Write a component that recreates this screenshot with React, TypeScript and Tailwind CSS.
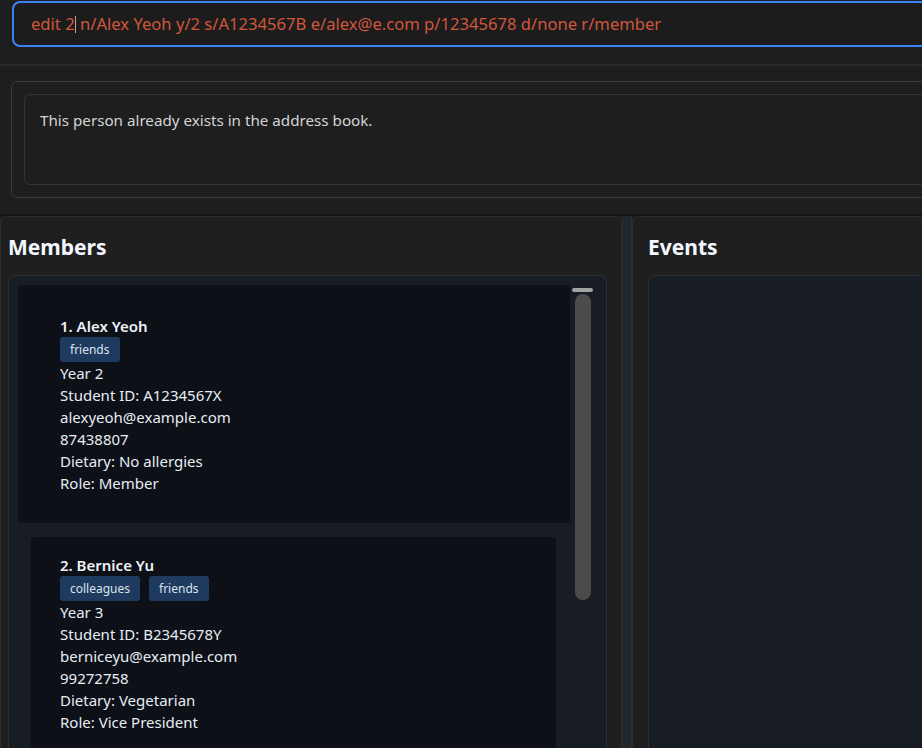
import React from 'react';

interface Member {
    name: string;
    tags: string[];
    year: string;
    studentId: string;
    email: string;
    phone: string;
    dietary: string;
    role: string;
}

const members: Member[] = [
    {
        name: '1. Alex Yeoh',
        tags: ['friends'],
        year: 'Year 2',
        studentId: 'A1234567X',
        email: 'alexyeoh@example.com',
        phone: '87438807',
        dietary: 'No allergies',
        role: 'Member',
    },
    {
        name: '2. Bernice Yu',
        tags: ['colleagues', 'friends'],
        year: 'Year 3',
        studentId: 'B2345678Y',
        email: 'berniceyu@example.com',
        phone: '99272758',
        dietary: 'Vegetarian',
        role: 'Vice President',
    },
];

const MemberCard: React.FC<{ member: Member; selected?: boolean }> = ({ member, selected }) => {
    return (
        <div
            className={
                selected
                    ? 'rounded bg-[#0d1017] pl-[42px] pt-[30px] pb-[29px]'
                    : 'ml-[13px] mr-[14px] rounded bg-[#0d1017] pl-[29px] pt-[17px] pb-[29px]'
            }
        >
            <div className="text-[15px] font-semibold leading-[22px] text-[#eef2f7]">{member.name}</div>
            <div className="flex gap-[9px]">
                {member.tags.map((tag) => (
                    <span
                        key={tag}
                        className="flex h-[25px] items-center rounded-[3px] bg-[#1f3a5f] px-[10px] text-[12px] text-[#dbe4ee]"
                    >
                        {tag}
                    </span>
                ))}
            </div>
            <div className="text-[15px] leading-[22px] text-[#e6edf3]">
                <div>{member.year}</div>
                <div>Student ID: {member.studentId}</div>
                <div>{member.email}</div>
                <div>{member.phone}</div>
                <div>Dietary: {member.dietary}</div>
                <div>Role: {member.role}</div>
            </div>
        </div>
    );
};

const App: React.FC = () => {
    return (
        <div
            className="h-screen w-full overflow-hidden bg-[#1e1e1e]"
            style={{ fontFamily: '"Noto Sans", "Open Sans", sans-serif' }}
        >
            <div className="flex h-full w-[1240px] flex-col">
                {/* command box */}
                <div className="h-[64px] pl-3 pt-px">
                    <div className="flex h-[46px] items-center rounded-lg border-2 border-[#3b82f6] bg-[#1c1c1c] pl-[17px] text-[16.6px] text-[#d0573c]">
                        <span className="whitespace-pre">edit 2</span>
                        <span className="h-[17px] w-px bg-[#c9a090]" />
                        <span className="whitespace-pre"> n/Alex Yeoh y/2 s/A1234567B e/alex@e.com p/12345678 d/none r/member</span>
                    </div>
                </div>
                <div className="h-[2px] bg-[#2a2a2a]" />

                {/* result display */}
                <div className="h-[148px] pl-[11px] pt-[15px]">
                    <div className="h-[117px] rounded-md border border-[#3a3a3a] p-3">
                        <div className="h-[91px] rounded-md border border-[#30343c] px-[15px] pt-[15px] text-[15.2px] leading-5 text-[#d4d4d4]">
                            This person already exists in the address book.
                        </div>
                    </div>
                </div>
                <div className="h-[2px] bg-[#141414]" />

                {/* panels */}
                <div className="flex min-h-0 flex-1">
                    <div className="flex w-[622px] flex-col rounded-t-md border-x border-t border-[#2c2c2c] bg-[#1f1f1f] pl-[7px] pr-[14px]">
                        <h2 className="flex h-[58px] items-center pt-[4px] text-[21px] font-bold text-[#f3f7ff]">Members</h2>
                        <div className="flex min-h-0 flex-1 rounded-t-lg border-x border-t border-[#2b3038] bg-[#181c23] pl-[9px] pt-[9px]">
                            <div className="flex flex-1 flex-col gap-[14px]">
                                {members.map((m, i) => (
                                    <MemberCard key={m.name} member={m} selected={i === 0} />
                                ))}
                            </div>
                            <div className="flex w-[36px] flex-col items-center pr-[11px] pt-[3px]">
                                <div className="h-[4px] w-[21px] rounded-sm bg-[#a3a3a3]" />
                                <div className="mt-[2px] h-[306px] w-[16px] rounded-full bg-[#4b4b4b]" />
                            </div>
                        </div>
                    </div>
                    <div className="w-[10px] border-x border-[#2a2f37] bg-[#21262d]" />
                    <div className="flex flex-1 flex-col rounded-t-md border-x border-t border-[#2c2c2c] bg-[#1f1f1f] pl-[15px] pr-4">
                        <h2 className="flex h-[58px] items-center pt-[4px] text-[21px] font-bold text-[#f3f7ff]">Events</h2>
                        <div className="flex-1 rounded-t-lg border-x border-t border-[#2b3038] bg-[#181c24]" />
                    </div>
                </div>
            </div>
        </div>
    );
};

export default App;
